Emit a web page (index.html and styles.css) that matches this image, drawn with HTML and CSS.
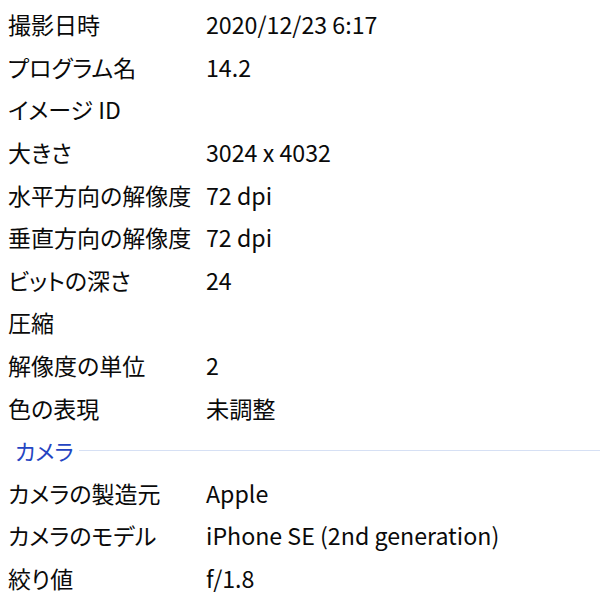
FILE: index.html
```html
<html>
  <head>
    <title>プロパティ - 詳細</title>
    <link rel="stylesheet" href="styles.css">
  </head>
  <body>
    <div class="props">
      <div class="row"><span class="key">撮影日時</span><span class="val">2020/12/23 6:17</span></div>
      <div class="row"><span class="key">プログラム名</span><span class="val">14.2</span></div>
      <div class="row"><span class="key">イメージ ID</span><span class="val"></span></div>
      <div class="row"><span class="key">大きさ</span><span class="val">3024 x 4032</span></div>
      <div class="row"><span class="key">水平方向の解像度</span><span class="val">72 dpi</span></div>
      <div class="row"><span class="key">垂直方向の解像度</span><span class="val">72 dpi</span></div>
      <div class="row"><span class="key">ビットの深さ</span><span class="val">24</span></div>
      <div class="row"><span class="key">圧縮</span><span class="val"></span></div>
      <div class="row"><span class="key">解像度の単位</span><span class="val">2</span></div>
      <div class="row"><span class="key">色の表現</span><span class="val">未調整</span></div>

      <div class="group"><span class="group-name">カメラ</span><span class="group-line"></span></div>

      <div class="row"><span class="key">カメラの製造元</span><span class="val">Apple</span></div>
      <div class="row"><span class="key">カメラのモデル</span><span class="val">iPhone SE (2nd generation)</span></div>
      <div class="row"><span class="key">絞り値</span><span class="val">f/1.8</span></div>
    </div>
  </body>
</html>
```

FILE: styles.css
```css
body { margin: 0; background-color: #FFFFFF; color: #000000;
       font-family: "Noto Sans CJK JP", "Noto Sans", sans-serif;
       font-size: 23px; font-feature-settings: "palt"; }

.props { padding: 3px 0 0 0; }

.row { display: grid; grid-template-columns: 198px 1fr;
       height: 42.6px; align-items: center;
       padding-left: 8px; white-space: nowrap; }

.key { color: #0a0a0a; }
.val { color: #0a0a0a; font-size: 23.2px; }

.group { display: flex; align-items: center; gap: 5px;
         height: 42.6px; padding-left: 15px; }

.group-name { color: #2445c2; font-size: 22px; }

.group-line { flex: 1; height: 1px; background-color: #d6e0f4; margin-top: 1px; }
```
